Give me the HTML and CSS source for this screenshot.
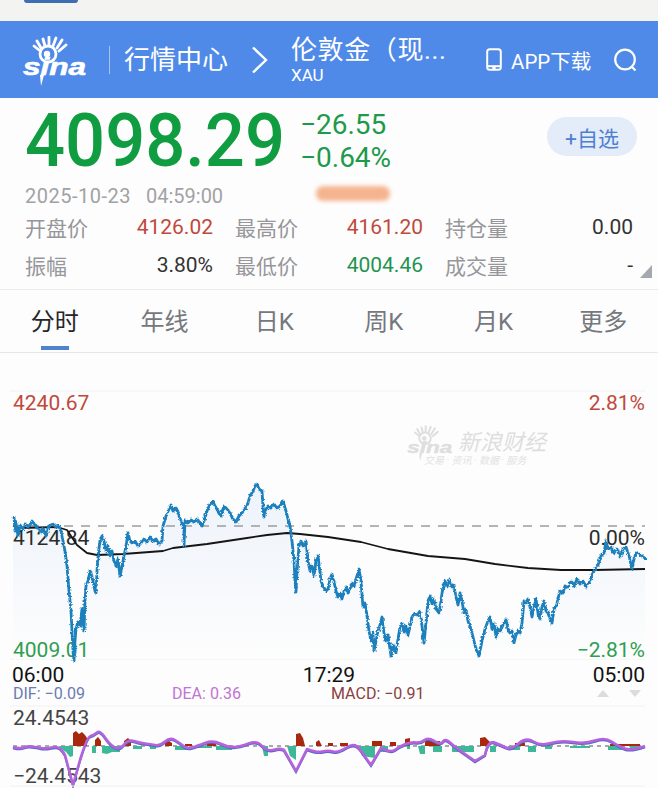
FILE: index.html
```html
<!DOCTYPE html>
<html>

<head>
    <title>伦敦金（现货黄金）</title>
    <meta charset="utf-8">
    <meta name="viewport" content="width=device-width, initial-scale=1.0">
    <link rel="stylesheet" href="styles.css">
</head>

<body>
    <svg class="defs" width="0" height="0">
        <symbol id="sina" viewBox="20 32 70 52">
            <g class="lashes">
                <path d="M39 46L34 42M41 44L37 37M45 42L43 35M49 41L49 33M53 42L56 34M57 44L62 36M59 47L66 41" />
                <circle cx="48" cy="50" r="8" />
            </g>
            <circle class="pupil" cx="47" cy="50" r="3.2" />
            <text class="sina-word" transform="translate(23 71) scale(1.37 1)">sina</text>
            <polygon class="pupil" points="40,71 44,71 41,82" />
        </symbol>
    </svg>

    <div class="status"><span class="status-pill"></span></div>

    <header class="topbar">
        <svg class="logo"><use href="#sina" /></svg>
        <span class="sep"></span>
        <span class="section">行情中心</span>
        <svg class="chevron" width="17" height="28" viewBox="0 0 17 28">
            <path d="M2 1.5L15 14L2 26.5" />
        </svg>
        <div class="title">
            <div class="name">伦敦金（现...</div>
            <div class="code">XAU</div>
        </div>
        <svg class="phone" width="16" height="23" viewBox="0 0 16 23">
            <rect x="1.2" y="1.2" width="13.6" height="20.6" rx="2.5" />
            <path d="M1.5 18.2H14.5" />
            <circle cx="8" cy="20" r="0.8" />
        </svg>
        <span class="app">APP下载</span>
        <svg class="search" width="25" height="24" viewBox="0 0 25 24">
            <circle cx="12" cy="11.5" r="9.8" />
            <path d="M18.5 18.5L22.5 22.5" />
        </svg>
    </header>

    <section class="quote">
        <div class="price-row">
            <div class="price">4098.29</div>
            <div class="change">
                <div>−26.55</div>
                <div>−0.64%</div>
            </div>
            <button class="watch">+自选</button>
        </div>
        <div class="time">
            <span class="date">2025-10-23</span>
            <span>04:59:00</span>
            <span class="blur"></span>
        </div>
        <div class="stats">
            <div class="stat"><span>开盘价</span><b class="up">4126.02</b></div>
            <div class="stat"><span>最高价</span><b class="up">4161.20</b></div>
            <div class="stat"><span>持仓量</span><b>0.00</b></div>
            <div class="stat"><span>振幅</span><b>3.80%</b></div>
            <div class="stat"><span>最低价</span><b class="down">4004.46</b></div>
            <div class="stat"><span>成交量</span><b>-</b></div>
        </div>
        <span class="corner"></span>
    </section>

    <nav class="tabs">
        <button class="tab active">分时</button>
        <button class="tab">年线</button>
        <button class="tab">日K</button>
        <button class="tab">周K</button>
        <button class="tab">月K</button>
        <button class="tab">更多</button>
    </nav>

    <!-- coordinates in the chart are page coordinates, so the viewBox starts at y=353 -->
    <svg class="chart" width="658" height="435" viewBox="0 353 658 435">
        <defs>
            <linearGradient id="area" x1="0" y1="0" x2="0" y2="1">
                <stop offset="0" stop-color="#edf3fb" />
                <stop offset="1" stop-color="#fdfdfd" />
            </linearGradient>
            <filter id="jitter" filterUnits="userSpaceOnUse" x="0" y="460" width="658" height="220">
                <feTurbulence type="turbulence" baseFrequency="0.3" numOctaves="1" seed="4" result="noise" />
                <feDisplacementMap in="SourceGraphic" in2="noise" scale="3" xChannelSelector="R" yChannelSelector="G" />
            </filter>
            <path id="macd" d="M13 747Q20 749 23.5 747.5Q27 746 32 746.5Q37 747 41 748Q45 749 51 747.5Q57 746 60 748.5Q63 751 65 755L73 785L80 760Q87 737 90.5 736Q94 735 97 732.5Q100 730 105 737.5Q110 745 115 747.5Q120 750 124 744.5Q128 739 134 741Q140 743 145 743.5Q150 744 155 745Q160 746 165 741.5Q170 737 175 740Q180 743 183.5 746Q187 749 192 747.5Q197 746 205 743Q213 740 220 743.5Q227 747 233.5 747Q240 747 248.5 743.5Q257 740 262 746Q267 752 275 749.5Q280 748 284 750L296 771L307 749Q317 753 322.5 751.5Q328 750 333 751.5Q338 753 346.5 747.5Q355 742 360 749.5L371 765L381 748Q391 753 395.5 749.5Q400 746 405.5 744Q411 742 416 742.5Q421 743 424.5 740Q428 737 434.5 741Q441 745 443 741.5Q445 738 450 742.5Q455 747 465 754L475 761L485 755Q488 740 494.5 742.5Q501 745 506 747.5Q511 750 518.5 743.5Q526 737 533.5 741.5Q541 746 551 743Q561 740 573 742Q585 744 595 740.5Q605 737 611.5 741.5Q618 746 624.5 748.5Q631 751 645 746" />
        </defs>

        <path class="grid" d="M10 391H645M10 659H645M10 706H645" />

        <text class="lbl up-c" x="13" y="410">4240.67</text>
        <text class="lbl up-c end" x="645" y="410">2.81%</text>

        <g class="mark">
            <use href="#sina" x="405" y="420" width="50" height="48" />
            <text class="mark-name" x="458" y="450">新浪财经</text>
            <text class="mark-sub" x="424" y="464">交易 · 资讯 · 数据 · 服务</text>
        </g>

        <path class="area" d="M13 515 14 530 15 522 17 535 19 524 22 528 25 523 28 526 31 520 34 524 37 528 40 531 42 527 45 535 48 525 52 523 55 526 58 525 60 530 62 540 64 550 66 565 68 590 70 610 71 630 72 650 73 660 74 640 75 628 77 620 79 625 81 608 82 625 83 630 84 600 85 585 87 580 89 570 90 572 92 580 94 590 95 592 96 570 97 555 99 540 101 535 103 540 105 550 107 545 109 555 111 550 113 560 115 565 117 558 119 575 121 565 123 555 125 545 127 532 129 540 131 542 134 540 137 545 140 542 143 538 146 541 149 536 152 540 155 538 158 543 161 540 162 525 165 515 168 508 170 505 172 510 175 507 178 515 181 522 183 528 183 545 184 520 187 522 190 519 193 521 196 518 199 522 201 525 203 520 206 510 209 503 212 501 214 505 217 510 220 515 223 505 226 508 229 512 232 518 235 521 238 515 241 512 244 508 247 502 249 495 252 490 254 485 256 483 258 488 261 490 262 505 263 516 264 510 267 505 270 507 273 503 276 507 279 505 282 500 285 510 287 518 289 525 291 540 293 560 294 580 295 591 296 570 298 545 300 540 302 545 305 540 307 560 309 570 311 565 313 575 315 560 317 555 320 580 322 585 325 590 327 588 329 578 331 573 333 581 335 590 337 596 339 592 341 598 343 590 345 586 347 592 349 588 351 582 353 586 355 578 357 572 358 568 360 580 361 594 362 606 364 602 366 615 368 630 370 640 372 632 373 650 375 640 377 630 379 624 381 616 383 632 385 640 387 634 389 648 390 655 392 644 395 652 397 638 399 626 401 622 403 632 405 625 407 634 409 626 411 616 413 613 416 614 419 610 421 625 423 642 425 622 427 600 429 595 431 603 433 598 435 608 438 612 440 600 442 585 444 580 446 586 449 578 451 586 453 584 455 596 457 604 459 592 461 600 463 612 465 608 467 620 469 626 471 632 473 640 475 648 478 655 481 640 484 628 487 620 489 616 491 628 493 622 495 636 497 628 499 630 501 626 503 622 505 618 507 628 509 632 511 630 513 642 515 634 517 630 519 632 521 622 523 600 525 602 527 598 529 606 531 616 533 606 535 598 537 612 539 618 541 606 543 600 545 610 547 612 549 618 551 622 553 608 555 606 557 598 559 590 562 592 564 585 567 587 570 580 573 585 576 578 579 583 582 580 585 586 588 582 591 574 594 568 597 564 600 555 603 552 605 540 607 548 610 546 613 552 616 548 619 556 622 548 625 546 628 555 631 568 633 558 635 552 638 553 641 555 645 558V659H13Z" />

        <path class="zero" d="M13 526H645" />

        <text class="lbl dark" x="13" y="545">4124.84</text>
        <text class="lbl dark end" x="645" y="545">0.00%</text>
        <text class="lbl down-c" x="13" y="657">4009.01</text>
        <text class="lbl down-c end" x="645" y="657">−2.81%</text>

        <path class="avg" d="M13 526 20 528 57 527 67 530 77 545 87 553 97 555 123 554 163 551 173 548 207 544 247 538 267 535 287 533 300 534 328 537 361 542 388 549 428 556 465 559 495 564 528 568 561 570 595 570 645 569" />

        <path class="line" d="M13 515 14 530 15 522 17 535 19 524 22 528 25 523 28 526 31 520 34 524 37 528 40 531 42 527 45 535 48 525 52 523 55 526 58 525 60 530 62 540 64 550 66 565 68 590 70 610 71 630 72 650 73 660 74 640 75 628 77 620 79 625 81 608 82 625 83 630 84 600 85 585 87 580 89 570 90 572 92 580 94 590 95 592 96 570 97 555 99 540 101 535 103 540 105 550 107 545 109 555 111 550 113 560 115 565 117 558 119 575 121 565 123 555 125 545 127 532 129 540 131 542 134 540 137 545 140 542 143 538 146 541 149 536 152 540 155 538 158 543 161 540 162 525 165 515 168 508 170 505 172 510 175 507 178 515 181 522 183 528 183 545 184 520 187 522 190 519 193 521 196 518 199 522 201 525 203 520 206 510 209 503 212 501 214 505 217 510 220 515 223 505 226 508 229 512 232 518 235 521 238 515 241 512 244 508 247 502 249 495 252 490 254 485 256 483 258 488 261 490 262 505 263 516 264 510 267 505 270 507 273 503 276 507 279 505 282 500 285 510 287 518 289 525 291 540 293 560 294 580 295 591 296 570 298 545 300 540 302 545 305 540 307 560 309 570 311 565 313 575 315 560 317 555 320 580 322 585 325 590 327 588 329 578 331 573 333 581 335 590 337 596 339 592 341 598 343 590 345 586 347 592 349 588 351 582 353 586 355 578 357 572 358 568 360 580 361 594 362 606 364 602 366 615 368 630 370 640 372 632 373 650 375 640 377 630 379 624 381 616 383 632 385 640 387 634 389 648 390 655 392 644 395 652 397 638 399 626 401 622 403 632 405 625 407 634 409 626 411 616 413 613 416 614 419 610 421 625 423 642 425 622 427 600 429 595 431 603 433 598 435 608 438 612 440 600 442 585 444 580 446 586 449 578 451 586 453 584 455 596 457 604 459 592 461 600 463 612 465 608 467 620 469 626 471 632 473 640 475 648 478 655 481 640 484 628 487 620 489 616 491 628 493 622 495 636 497 628 499 630 501 626 503 622 505 618 507 628 509 632 511 630 513 642 515 634 517 630 519 632 521 622 523 600 525 602 527 598 529 606 531 616 533 606 535 598 537 612 539 618 541 606 543 600 545 610 547 612 549 618 551 622 553 608 555 606 557 598 559 590 562 592 564 585 567 587 570 580 573 585 576 578 579 583 582 580 585 586 588 582 591 574 594 568 597 564 600 555 603 552 605 540 607 548 610 546 613 552 616 548 619 556 622 548 625 546 628 555 631 568 633 558 635 552 638 553 641 555 645 558" />

        <text class="lbl time-l" x="12" y="682">06:00</text>
        <text class="lbl time-l" x="329" y="682" text-anchor="middle">17:29</text>
        <text class="lbl time-l end" x="645" y="682">05:00</text>

        <text class="macd-l dif" x="13" y="699">DIF: −0.09</text>
        <text class="macd-l dea" x="172" y="699">DEA: 0.36</text>
        <text class="macd-l mac" x="331" y="699">MACD: −0.91</text>
        <polygon class="arrow" points="603,690 597,697 609,697" />
        <polygon class="arrow" points="629,690 641,690 635,697" />

        <text class="lbl axis" x="13" y="725">24.4543</text>
        <text class="lbl axis" x="13" y="783">−24.4543</text>

        <path class="zero thin" d="M13 746H645" />
        <path class="bar-up" d="M73 746V733L76 731 79 734 82 732 85 735 87 738V746ZM95 746V740L98 737 101 741V746ZM124 746V741L128 738 131 741V746ZM165 746V743L169 741 172 743V746ZM185 746V744H192V746ZM207 746V743H216V746ZM296 746V734L300 733 303 738 305 746ZM316 746V742L319 740 322 746ZM328 746V743H333V746ZM340 746V743H348V746ZM372 746V741H382V746ZM390 746V742H396V746ZM405 746V739L410 738V746ZM425 746V741H440V746ZM480 746V738L485 737 490 742V746ZM515 746V743H525V746ZM540 746V744H550V746ZM610 746V744H640V746Z" />
        <path class="bar-down" d="M59 746H73V756L70 757 66 752 60 748ZM92 746H96V753H92ZM102 746H120V752H112L107 754 102 753ZM133 746H142V749H133ZM150 746H156V749H150ZM175 746H188V750H175ZM198 746H212V748H198ZM216 746H232V750H216ZM262 746H268V756H264ZM287 746H296V760L290 756ZM359 746H375V758L362 756ZM380 746H388V752H380ZM407 746H410V749H407ZM418 746H425V754H420ZM433 746H442V752H433ZM452 746H474V752H452ZM490 746H496V752H490ZM508 746H520V750H508ZM528 746H536V752H528ZM545 746H552V749H545ZM570 746H590V748H570ZM608 746H622V750H608ZM630 746H640V750H630Z" />
        <use class="macd-blue" href="#macd" y="1.2" />
        <use class="macd-purple" href="#macd" />
        <path class="grid" d="M10 786H645" />
    </svg>
</body>

</html>
```

FILE: styles.css
```css
* {
    box-sizing: border-box;
}

body {
    margin: 0;
    width: 658px;
    height: 788px;
    overflow: hidden;
    background-color: #fdfdfd;
    font-family: Roboto, "Noto Sans CJK SC", sans-serif;
}

.defs {
    position: absolute;
}

.status {
    height: 21px;
    background-color: #f3f3f2;
}

.status-pill {
    display: block;
    width: 54px;
    height: 3px;
    margin-left: 24px;
    background-color: #3e6eb2;
    border-radius: 0 0 8px 8px;
}

/* blue top bar */
.topbar {
    display: flex;
    align-items: center;
    height: 77px;
    padding-left: 20px;
    background-color: #4f8ae8;
    color: #fff;
}

.logo {
    width: 70px;
    height: 52px;
    margin-top: 4px;
    color: #fff;
}

.lashes {
    fill: none;
    stroke: currentColor;
    stroke-width: 2.8;
    stroke-linecap: round;
}

.pupil {
    fill: currentColor;
}

.sina-word {
    font-family: "Liberation Sans", sans-serif;
    font-weight: bold;
    font-style: italic;
    font-size: 23px;
    fill: currentColor;
    stroke: currentColor;
    stroke-width: 0.6;
}

.sep {
    width: 1px;
    height: 28px;
    margin-left: 19px;
    background-color: rgba(255, 255, 255, 0.5);
}

.section {
    margin-left: 14px;
    font-size: 26px;
    line-height: 36px;
}

.chevron {
    margin-left: 23px;
    fill: none;
    stroke: #fff;
    stroke-width: 2.4;
}

.title {
    width: 190px;
    margin-left: 23px;
}

.name {
    font-size: 26px;
    line-height: 30px;
    letter-spacing: 0.6px;
}

.code {
    font-size: 17px;
    line-height: 20px;
}

.phone {
    margin-left: 5px;
    fill: none;
    stroke: #fff;
    stroke-width: 2;
}

.app {
    margin-left: 9px;
    font-size: 20.5px;
}

.search {
    margin-left: 22px;
    fill: none;
    stroke: #fff;
    stroke-width: 2.2;
}

/* price block */
.quote {
    position: relative;
    height: 192px;
    padding: 0 25px;
    border-bottom: 1px solid #ececf0;
}

.price-row {
    display: flex;
    height: 84px;
}

.price {
    width: 275px;
    font-size: 75px;
    font-weight: 500;
    line-height: 84px;
    color: #109c40;
    transform: scaleX(0.94);
    transform-origin: left;
}

.change {
    padding-top: 10px;
    font-size: 28px;
    line-height: 33px;
    color: #1e9a4b;
}

.watch {
    width: 90px;
    height: 39px;
    margin: 19px -4px 0 auto;
    border: 0;
    border-radius: 20px;
    background-color: #e3ecf8;
    color: #4d80cf;
    font-family: inherit;
    font-size: 21px;
}

.time {
    display: flex;
    align-items: center;
    gap: 15px;
    height: 24px;
    margin-top: 2px;
    font-size: 20px;
    color: #a2a2a4;
}

.date {
    letter-spacing: 0.5px;
}

.blur {
    width: 74px;
    height: 15px;
    margin: -6px 0 0 78px;
    border-radius: 7px;
    background-color: #f5b48f;
    filter: blur(2px);
}

.stats {
    display: grid;
    grid-template-columns: repeat(3, 188px);
    column-gap: 22px;
    grid-auto-rows: 38px;
}

.stat {
    display: flex;
    align-items: center;
    justify-content: space-between;
    font-size: 21px;
    color: #97979b;
}

.stat b {
    font-weight: 400;
    color: #333;
}

.stat .up {
    color: #c0493c;
}

.stat .down {
    color: #1f9450;
}

.corner {
    position: absolute;
    right: 6px;
    bottom: 11px;
    width: 0;
    height: 0;
    border-left: 12px solid transparent;
    border-bottom: 13px solid #a5a8ae;
}

/* tabs */
.tabs {
    display: flex;
    height: 63px;
    border-bottom: 1px solid #e6e6ec;
}

.tab {
    position: relative;
    flex: 1;
    padding: 0 0 3px;
    border: 0;
    background: none;
    font-family: inherit;
    font-size: 24px;
    color: #76787e;
}

.tab.active {
    color: #26262a;
}

.tab.active::after {
    content: "";
    position: absolute;
    left: 41px;
    bottom: 2px;
    width: 28px;
    height: 4px;
    background-color: #4f84cc;
}

/* chart */
.chart {
    display: block;
}

.grid {
    fill: none;
    stroke: #f1f1f2;
    stroke-width: 1;
}

.zero {
    fill: none;
    stroke: #9c9c9c;
    stroke-width: 1.4;
    stroke-dasharray: 9 8;
}

.zero.thin {
    stroke: #555;
    stroke-width: 1;
    stroke-dasharray: 4 4;
}

.area {
    fill: url(#area);
}

.line {
    fill: none;
    stroke: #1f80bd;
    stroke-width: 2.8;
    stroke-linejoin: round;
    filter: url(#jitter);
}

.avg {
    fill: none;
    stroke: #151515;
    stroke-width: 1.8;
    stroke-linejoin: round;
}

.lbl {
    font-size: 21px;
}

.end {
    text-anchor: end;
}

.up-c {
    fill: #c0493c;
}

.down-c {
    fill: #2f9e50;
}

.dark {
    fill: #2b2b2b;
}

.time-l {
    fill: #111;
}

.axis {
    fill: #444;
}

.macd-l {
    font-size: 16px;
}

.dif {
    fill: #6a7bb3;
}

.dea {
    fill: #c274d4;
}

.mac {
    fill: #8a4040;
}

.arrow {
    fill: #dcdcdc;
}

.bar-up {
    fill: #a8280f;
}

.bar-down {
    fill: #3fb89a;
}

.macd-blue {
    fill: none;
    stroke: #5566c4;
    stroke-width: 2;
}

.macd-purple {
    fill: none;
    stroke: #b463dc;
    stroke-width: 2.6;
    stroke-linejoin: round;
}

/* watermark */
.mark {
    color: #dedede;
}

.mark-name {
    font-size: 22px;
    font-style: italic;
    fill: #dedede;
}

.mark-sub {
    font-size: 10px;
    font-style: italic;
    fill: #e2e2e2;
}
```
